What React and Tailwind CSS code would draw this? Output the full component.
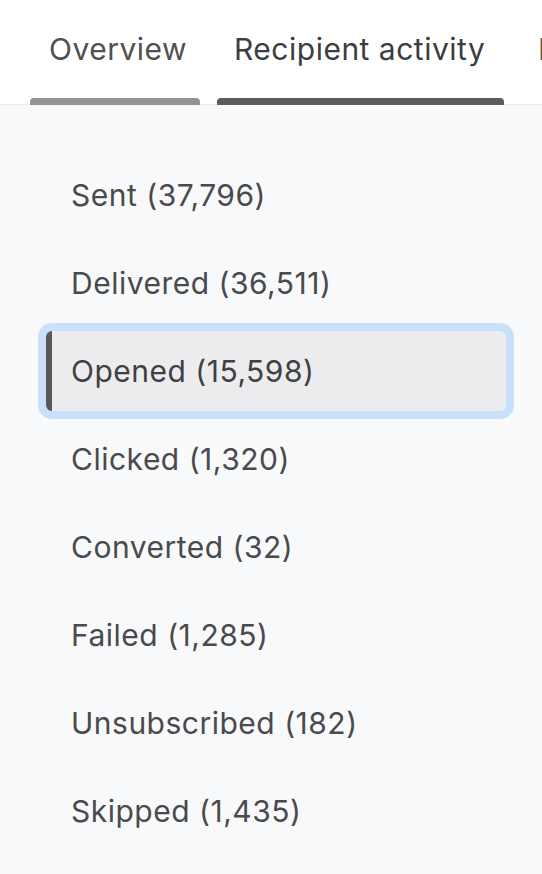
export default function App() {
  const items = [
    "Sent (37,796)",
    "Delivered (36,511)",
    "Opened (15,598)",
    "Clicked (1,320)",
    "Converted (32)",
    "Failed (1,285)",
    "Unsubscribed (182)",
    "Skipped (1,435)",
  ];
  const selected = 2;
  return (
    <div className="w-[542px] h-[874px] overflow-hidden bg-[#f8f9fb] font-['Inter',sans-serif] tracking-[0.5px]">
      <div className="h-[105px] bg-white border-b border-[#ebebeb] flex items-stretch gap-[17px] pl-[30px] whitespace-nowrap">
        <div className="flex flex-col w-[170px] shrink-0">
          <div className="pt-[30px] pl-[19px] text-[30px] leading-[38px] text-[#505052]">Overview</div>
          <div className="flex-1" />
          <div className="h-[7px] rounded-t-[4px] bg-[#949495] mb-[-1px]" />
        </div>
        <div className="flex flex-col w-[287px] shrink-0">
          <div className="pt-[30px] pl-[17px] text-[30px] leading-[38px] text-[#3d3d40]">Recipient activity</div>
          <div className="flex-1" />
          <div className="h-[7px] rounded-t-[4px] bg-[#5c5c5e] mb-[-1px]" />
        </div>
        <div className="flex flex-col w-[120px] shrink-0">
          <div className="pt-[30px] pl-[17px] text-[30px] leading-[38px] text-[#505052]">Links</div>
        </div>
      </div>
      <div className="flex flex-col gap-[8px] pt-[50px] pl-[46px] pr-[36px]">
        {items.map((t, i) => (
          <div
            key={t}
            className={
              i === selected
                ? "h-[80px] flex items-center pl-[19px] border-l-[6px] border-[#58585a] bg-[#ececee] rounded-[6px] ring-8 ring-[#c9e0fb] text-[30px] text-[#404043]"
                : "h-[80px] flex items-center pl-[19px] border-l-[6px] border-transparent text-[30px] text-[#4a4a4d]"
            }
          >
            {t}
          </div>
        ))}
      </div>
    </div>
  );
}
